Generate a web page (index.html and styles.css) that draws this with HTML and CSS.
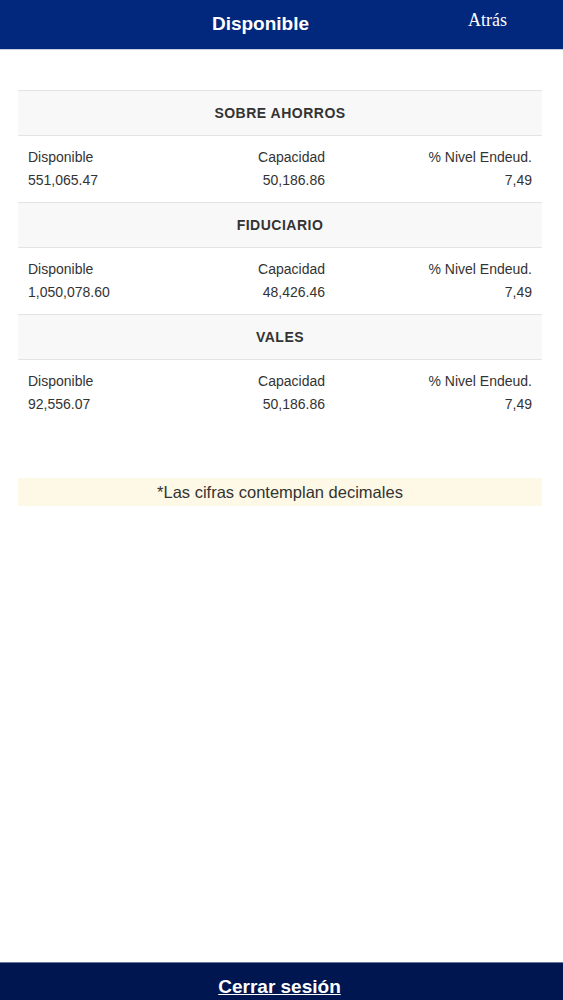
FILE: index.html
```html
<!DOCTYPE html>
<html lang="es">
<head>
    <meta charset="UTF-8">
    <meta name="viewport" content="width=device-width, initial-scale=1.0">
    <title>Disponible</title>
    <link rel="stylesheet" href="styles.css">
</head>
<body>
    <div class="topbar">
        <span class="title">Disponible</span>
        <a class="back" href="#">Atrás</a>
    </div>

    <div class="content">
        <div class="credit-table">
            <div class="section">SOBRE AHORROS</div>
            <div class="row">
                <div class="col first"><span>Disponible</span><span>551,065.47</span></div>
                <div class="col"><span>Capacidad</span><span>50,186.86</span></div>
                <div class="col last"><span>% Nivel Endeud.</span><span>7,49</span></div>
            </div>

            <div class="section">FIDUCIARIO</div>
            <div class="row">
                <div class="col first"><span>Disponible</span><span>1,050,078.60</span></div>
                <div class="col"><span>Capacidad</span><span>48,426.46</span></div>
                <div class="col last"><span>% Nivel Endeud.</span><span>7,49</span></div>
            </div>

            <div class="section">VALES</div>
            <div class="row">
                <div class="col first"><span>Disponible</span><span>92,556.07</span></div>
                <div class="col"><span>Capacidad</span><span>50,186.86</span></div>
                <div class="col last"><span>% Nivel Endeud.</span><span>7,49</span></div>
            </div>
        </div>

        <div class="note">*Las cifras contemplan decimales</div>
    </div>

    <div class="footer">
        <a href="#">Cerrar sesión</a>
    </div>
</body>
</html>
```

FILE: styles.css
```css
html, body { height: 100%; }
body { margin: 0; font-family: "Liberation Sans", Arial, sans-serif; color: #333; background: #fff; display: flex; flex-direction: column; }
.topbar { height: 50px; background-color: #01287c; border-bottom: 1px solid #c9cfdc; box-sizing: border-box; display: flex; align-items: center; position: relative; }
.topbar .title { flex: 1; text-align: center; padding-right: 42px; padding-bottom: 2px; color: #fff; font-weight: bold; font-size: 19px; }
.topbar .back { position: absolute; right: 56px; top: 10px; color: #fff; text-decoration: none; font-family: "Liberation Serif", "Times New Roman", serif; font-size: 18px; }
.content { flex: 1; padding: 40px 21px 0 18px; }
.credit-table { border-top: 1px solid #e3e3e3; }
.section { height: 44px; line-height: 44px; background: #f8f8f8; border-bottom: 1px solid #e3e3e3; text-align: center; font-weight: bold; font-size: 14px; letter-spacing: 0.5px; }
.row { display: grid; grid-template-columns: 160px 157px 1fr; padding: 10px 0 10px; border-bottom: 1px solid #e3e3e3; font-size: 14px; line-height: 23px; }
.row:last-child { border-bottom: none; }
.col { display: flex; flex-direction: column; align-items: flex-end; padding: 0 10px; }
.col.first { align-items: flex-start; }
.note { margin-top: 52px; height: 28px; line-height: 28px; background: #fdf9e6; text-align: center; font-size: 16.5px; }
.footer { height: 38px; background-color: #001651; border-top: 1px solid #6b7aa0; box-sizing: border-box; text-align: center; }
.footer a { color: #fff; font-weight: bold; font-size: 19px; line-height: 48px; padding-right: 4px; }
```
